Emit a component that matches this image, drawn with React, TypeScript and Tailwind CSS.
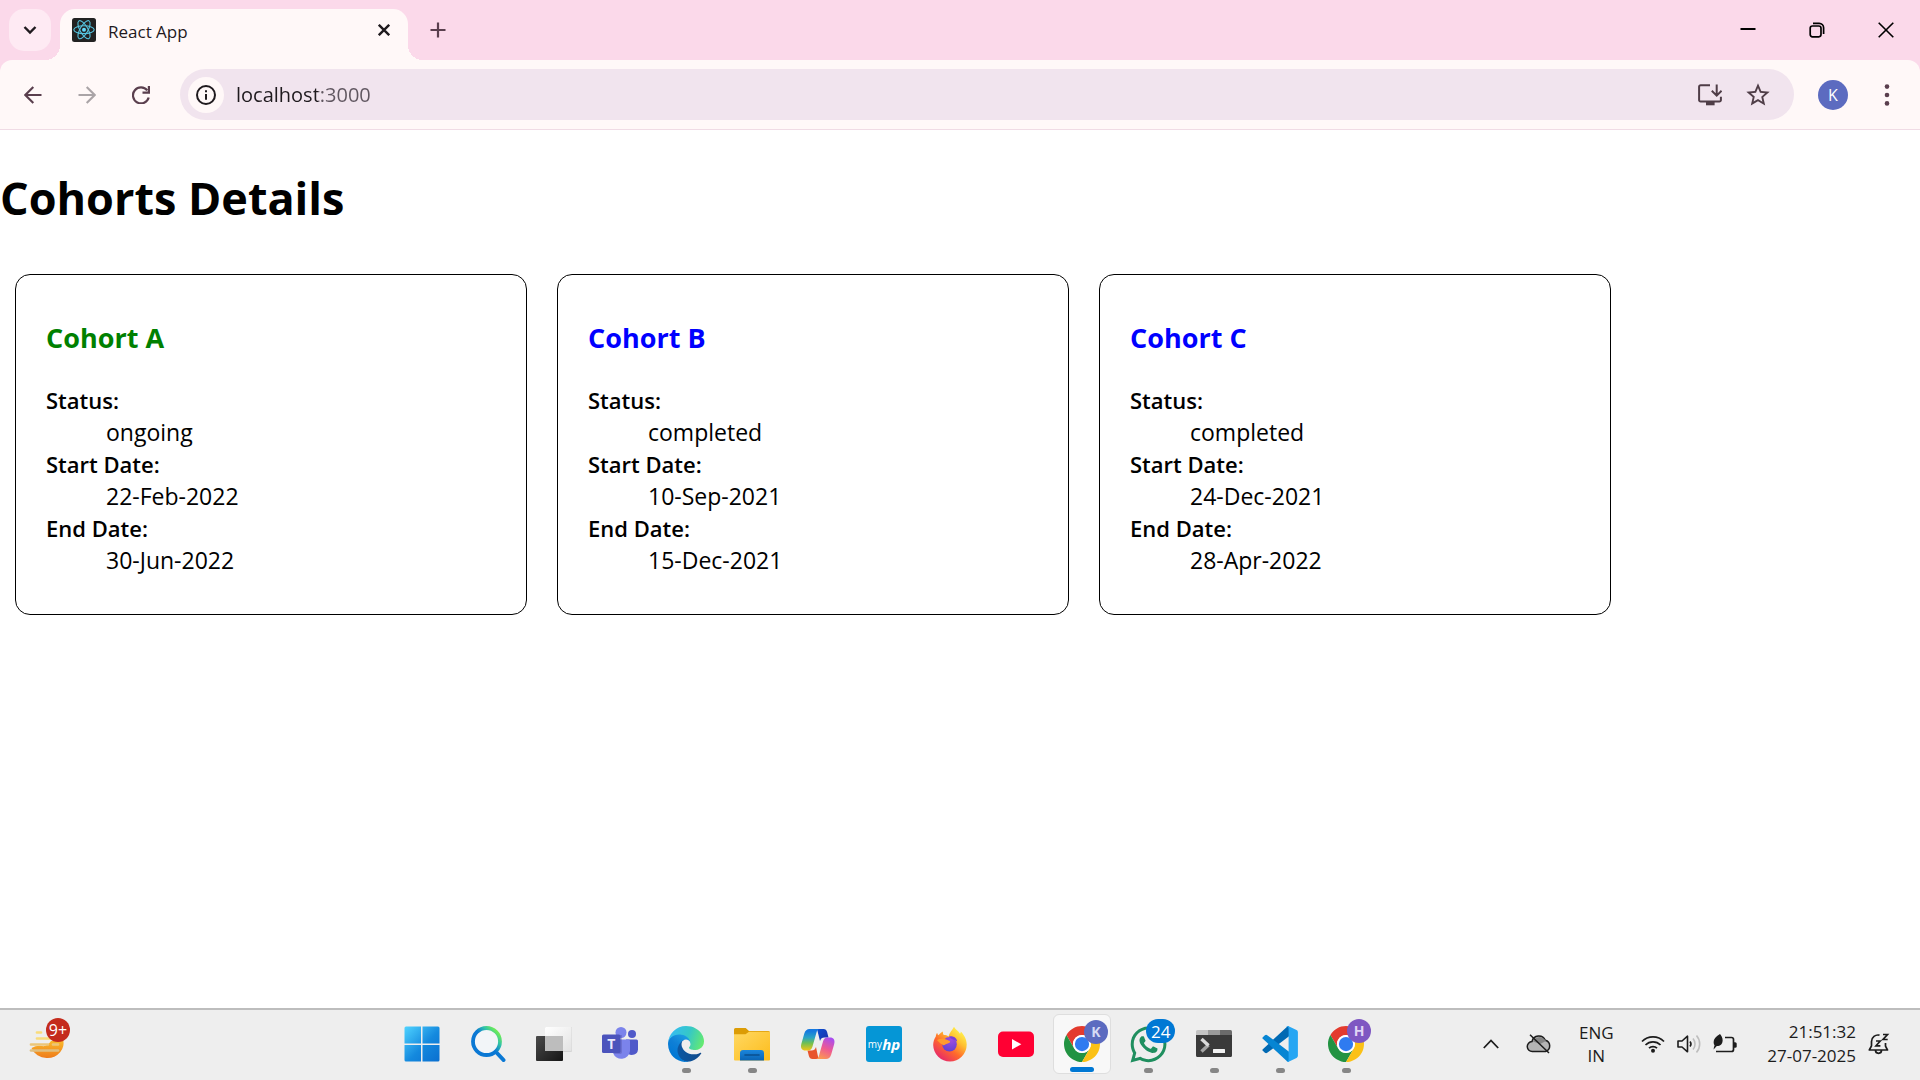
import type { ReactNode } from "react";
import { FaWhatsapp } from "react-icons/fa";

type Cohort = { name: string; status: "ongoing" | "completed"; start: string; end: string };

const cohorts: Cohort[] = [
  { name: "Cohort A", status: "ongoing", start: "22-Feb-2022", end: "30-Jun-2022" },
  { name: "Cohort B", status: "completed", start: "10-Sep-2021", end: "15-Dec-2021" },
  { name: "Cohort C", status: "completed", start: "24-Dec-2021", end: "28-Apr-2022" },
];

function CohortCard({ cohort }: { cohort: Cohort }) {
  return (
    <article className="w-[512px] max-w-full rounded-[15px] border border-black px-[30px] pt-4 pb-[14px]">
      <h3
        className={`my-7 text-[27px] leading-[37px] font-bold ${
          cohort.status === "ongoing" ? "text-[#008000]" : "text-[#0000ff]"
        }`}
      >
        {cohort.name}
      </h3>
      <dl className="mb-6 text-[23px] leading-8">
        <dt className="text-[22px] leading-8 font-semibold">Status:</dt>
        <dd className="ml-[60px]">{cohort.status}</dd>
        <dt className="text-[22px] leading-8 font-semibold">Start Date:</dt>
        <dd className="ml-[60px]">{cohort.start}</dd>
        <dt className="text-[22px] leading-8 font-semibold">End Date:</dt>
        <dd className="ml-[60px]">{cohort.end}</dd>
      </dl>
    </article>
  );
}

function ReactFavicon() {
  return (
    <svg viewBox="0 0 24 24" className="size-6 shrink-0" aria-hidden="true">
      <rect width="24" height="24" rx="2.5" fill="#222" />
      <g fill="none" stroke="#56c5e0" strokeWidth="1.1">
        <ellipse cx="12" cy="11.7" rx="10.2" ry="3.9" />
        <ellipse cx="12" cy="11.7" rx="10.2" ry="3.9" transform="rotate(60 12 11.7)" />
        <ellipse cx="12" cy="11.7" rx="10.2" ry="3.9" transform="rotate(120 12 11.7)" />
      </g>
      <circle cx="12" cy="11.7" r="2" fill="#61dafb" />
    </svg>
  );
}

function TabStrip() {
  return (
    <div className="flex h-[60px] items-start bg-[#fbd9ea]">
      <button
        aria-label="Search tabs"
        className="mt-[9px] ml-[9px] flex size-[42px] shrink-0 items-center justify-center rounded-[15px] bg-[#feeaf3]"
      >
        <svg viewBox="0 0 14 10" className="h-[10px] w-[14px]" fill="none" stroke="#1f1a1e" strokeWidth="2.4">
          <path d="M1.5 2 7 7.5 12.5 2" />
        </svg>
      </button>
      <div className="relative mt-[9px] ml-[9px] flex h-[51px] w-[348px] items-start rounded-t-[15px] bg-[#fff8f8] pt-[9px] pr-[15px] pl-3 before:absolute before:bottom-0 before:-left-[15px] before:size-[15px] before:bg-[radial-gradient(circle_at_0_0,transparent_15px,#fff8f8_15px)] after:absolute after:-right-[15px] after:bottom-0 after:size-[15px] after:bg-[radial-gradient(circle_at_100%_0,transparent_15px,#fff8f8_15px)]">
        <ReactFavicon />
        <span className="ml-3 flex-1 text-[17px] leading-7 text-[#1f1a1e]">React App</span>
        <button aria-label="Close tab" className="mt-[3px] flex size-[18px] items-center justify-center self-start">
          <svg viewBox="0 0 12 12" className="size-3" stroke="#1f1a1e" strokeWidth="2.4">
            <path d="M.8.8l10.4 10.4M11.2.8.8 11.2" />
          </svg>
        </button>
      </div>
      <button aria-label="New tab" className="mt-[9px] ml-[9px] flex size-[42px] items-center justify-center">
        <svg viewBox="0 0 16 16" className="size-4" stroke="#5a3f4e" strokeWidth="2.2">
          <path d="M8 .5v15M.5 8h15" />
        </svg>
      </button>
      <div className="ml-auto flex h-[59px] items-center">
        <button aria-label="Minimize" className="flex h-full w-[69px] items-center justify-center">
          <svg viewBox="0 0 16 16" className="size-4" stroke="#000" strokeWidth="2">
            <path d="M.5 7h15" />
          </svg>
        </button>
        <button aria-label="Restore" className="flex h-full w-[69px] items-center justify-center">
          <svg viewBox="0 0 16 16" className="size-4" fill="none" stroke="#000" strokeWidth="1.7">
            <rect x="1.2" y="4" width="10.8" height="10.8" rx="2.2" />
            <path d="M4 1.4h6.2a4.4 4.4 0 0 1 4.4 4.4V12" />
          </svg>
        </button>
        <button aria-label="Close" className="flex h-full w-[69px] items-center justify-center">
          <svg viewBox="0 0 16 16" className="size-4" stroke="#000" strokeWidth="1.6">
            <path d="M.7.7l14.6 14.6M15.3.7.7 15.3" />
          </svg>
        </button>
      </div>
    </div>
  );
}

function Toolbar() {
  return (
    <div className="bg-[#fbd9ea]">
      <div className="flex h-[70px] items-center rounded-t-[12px] border-b border-[#f0dbe5] bg-[#fff8f8] pl-[6px]">
        <button aria-label="Back" className="flex size-[54px] items-center justify-center">
          <svg viewBox="0 0 18 18" className="size-[18px]" fill="none" stroke="#5a3f4e" strokeWidth="2.1">
            <path d="M17.5 9H1.8M9.3.9 1.3 9l8 8.1" />
          </svg>
        </button>
        <button aria-label="Forward" className="flex size-[54px] items-center justify-center">
          <svg viewBox="0 0 18 18" className="size-[18px]" fill="none" stroke="#aaa4a7" strokeWidth="2.1">
            <path d="M.5 9h15.7M8.7.9l8 8.1-8 8.1" />
          </svg>
        </button>
        <button aria-label="Reload" className="flex size-[54px] items-center justify-center">
          <svg viewBox="0 0 18 18" className="size-[18px]" fill="none" stroke="#5a3f4e" strokeWidth="2.2">
            <path d="M15.3 4.4A8 8 0 1 0 16.7 11.5" />
            <path d="M16.9 0v6.6h-6.4" />
          </svg>
        </button>
        <div className="ml-3 flex h-[51px] min-w-0 flex-1 items-center rounded-full bg-[#f1e4ee] pr-3 pl-2">
          <button
            aria-label="View site information"
            className="flex size-9 shrink-0 items-center justify-center rounded-full bg-[#fff8f8]"
          >
            <svg viewBox="0 0 20 20" className="size-5" fill="none" stroke="#1f1a1e" strokeWidth="2">
              <circle cx="10" cy="10" r="9" />
              <path d="M10 9v5.8M10 5.2v2.1" />
            </svg>
          </button>
          <input
            aria-label="Address and search bar"
            defaultValue="localhost:3000"
            className="ml-3 h-9 min-w-0 flex-1 bg-[linear-gradient(90deg,#1f1a1e_82px,#605660_82px)] bg-clip-text text-[20px] leading-7 text-transparent caret-black outline-none"
          />
          <button aria-label="Install app" className="flex size-12 items-center justify-center">
            <svg viewBox="0 0 24 22" className="h-[22px] w-6" fill="none" stroke="#4f3d47" strokeWidth="2">
              <path d="M12 1.2H2.6A1.5 1.5 0 0 0 1.1 2.7v13.2a1.5 1.5 0 0 0 1.5 1.5h18.8a1.5 1.5 0 0 0 1.5-1.5v-3.2M18.7.5v11M13.8 6.8l4.9 4.9 4.9-4.9" />
              <path d="M8 17.5h8.6v3.8H8z" fill="#4f3d47" stroke="none" />
            </svg>
          </button>
          <button aria-label="Bookmark this tab" className="flex size-12 items-center justify-center">
            <svg viewBox="0 0 24 24" className="size-7" fill="#4f3d47">
              <path d="M22 9.24l-7.19-.62L12 2 9.19 8.63 2 9.24l5.46 4.73L5.82 21 12 17.27 18.18 21l-1.63-7.03L22 9.24zM12 15.4l-3.76 2.27 1-4.28-3.32-2.88 4.38-.38L12 6.1l1.71 4.04 4.38.38-3.32 2.88 1 4.28L12 15.4z" />
            </svg>
          </button>
        </div>
        <button
          aria-label="Profile K"
          className="ml-6 flex size-[30px] shrink-0 items-center justify-center rounded-full bg-[#5c6bc0] text-[16px] font-normal text-white"
        >
          K
        </button>
        <button aria-label="Browser menu" className="mr-[9px] ml-[15px] flex size-12 items-center justify-center">
          <svg viewBox="0 0 6 22" className="h-[22px] w-[6px]" fill="#5a3f4e">
            <circle cx="3" cy="2.6" r="2.3" />
            <circle cx="3" cy="11" r="2.3" />
            <circle cx="3" cy="19.4" r="2.3" />
          </svg>
        </button>
      </div>
    </div>
  );
}

function WeatherIcon() {
  return (
    <svg viewBox="0 0 36 36" className="size-9" fill="none" strokeLinecap="round">
      <defs>
        <linearGradient id="sun" x1="0" y1="0" x2="0" y2="1">
          <stop offset="0" stopColor="#fbc02d" />
          <stop offset="1" stopColor="#ee7b1a" />
        </linearGradient>
      </defs>
      <path d="M34 13A16 15 0 0 1 18 32 16 15 0 0 1 2.5 22Q8 19 13 20T22 15z" fill="url(#sun)" />
      <path d="M8 6.500h4M8 12.500h22" stroke="#f9dc7c" strokeWidth="2.700" />
      <path d="M2 18.500h17M24 18.500h5" stroke="#ecc678" strokeWidth="2.700" />
      <path d="M2 24.500h27" stroke="#dfbf80" strokeWidth="2.700" />
    </svg>
  );
}

function WindowsIcon() {
  return (
    <svg viewBox="0 0 36 36" className="size-9">
      <defs>
        <linearGradient id="win" x1="0" y1="0" x2="1" y2="1">
          <stop offset="0" stopColor="#4fd3ff" />
          <stop offset="0.55" stopColor="#1489de" />
          <stop offset="1" stopColor="#0a6fd0" />
        </linearGradient>
      </defs>
      <path
        fill="url(#win)"
        d="M2 .5h15v17H.5V2A1.500 1.500 0 0 1 2 .5zM18.500.5h15.500A1.500 1.500 0 0 1 35.500 2v15.500h-17zM.5 19h16.500v16.500H2A1.500 1.500 0 0 1 .5 34zM18.500 19h17v15a1.500 1.500 0 0 1-1.500 1.500H18.500z"
      />
    </svg>
  );
}

function SearchIcon() {
  return (
    <svg viewBox="0 0 36 36" className="size-9" fill="none">
      <defs>
        <linearGradient id="lens" x1="0.2" y1="0.8" x2="0.9" y2="0.15">
          <stop offset="0.45" stopColor="#0a78d4" />
          <stop offset="0.75" stopColor="#31c3a8" />
          <stop offset="1" stopColor="#6bea5a" />
        </linearGradient>
      </defs>
      <path d="M26 26l7.500 8" stroke="#0a78d4" strokeWidth="4" strokeLinecap="round" />
      <circle cx="16.500" cy="15.500" r="13.500" fill="#f2f5f8" stroke="url(#lens)" strokeWidth="3.800" />
    </svg>
  );
}

function TaskViewIcon() {
  return (
    <svg viewBox="0 0 36 36" className="size-9">
      <defs>
        <linearGradient id="tvDark" x1="0" y1="0" x2="1" y2="1">
          <stop offset="0" stopColor="#4a4a4a" />
          <stop offset="1" stopColor="#151515" />
        </linearGradient>
        <linearGradient id="tvLight" x1="0" y1="0" x2="1" y2="1">
          <stop offset="0" stopColor="#fff" />
          <stop offset="1" stopColor="#e3e3e3" />
        </linearGradient>
      </defs>
      <rect x="9" y="1" width="27" height="25" rx="1" fill="#d5d5d5" />
      <rect x="9" y="1" width="26.500" height="24" rx="1" fill="url(#tvLight)" />
      <rect x="0" y="10" width="27" height="25" rx="1" fill="url(#tvDark)" />
      <path d="M9 10h18v15H9z" fill="#bdbdbd" />
    </svg>
  );
}

function TeamsIcon() {
  return (
    <svg viewBox="0 0 36 36" className="size-9">
      <circle cx="30" cy="8" r="4" fill="#5059c9" />
      <path d="M24 13.500h10.500a1.500 1.500 0 0 1 1.500 1.500v8.500a6 6 0 0 1-10 4z" fill="#5059c9" />
      <circle cx="19" cy="6.500" r="5.500" fill="#7b83eb" />
      <path d="M11 13.500h15.500a1.500 1.500 0 0 1 1.500 1.500v10a8.800 8.800 0 0 1-17 2z" fill="#7b83eb" />
      <path d="M17 9h3v17a2 2 0 0 1-2 2h-6z" fill="#444791" opacity="0.3" />
      <rect x="0" y="8.500" width="18.500" height="18.500" rx="1.600" fill="#4b53bc" />
      <text x="9.200" y="23" textAnchor="middle" fontSize="14" fontWeight="700" fill="#e9e9fb">
        T
      </text>
    </svg>
  );
}

function EdgeIcon() {
  return (
    <svg viewBox="0 0 256 256" className="size-9">
      <defs>
        <linearGradient id="edgeA" x1="60" y1="177" x2="240" y2="177" gradientUnits="userSpaceOnUse">
          <stop offset="0" stopColor="#0c59a4" />
          <stop offset="1" stopColor="#114a8b" />
        </linearGradient>
        <linearGradient id="edgeB" x1="140" y1="80" x2="40" y2="220" gradientUnits="userSpaceOnUse">
          <stop offset="0" stopColor="#1b9de2" />
          <stop offset="0.5" stopColor="#0f7fd6" />
          <stop offset="1" stopColor="#0078d4" />
        </linearGradient>
        <linearGradient id="edgeC" x1="20" y1="50" x2="250" y2="130" gradientUnits="userSpaceOnUse">
          <stop offset="0" stopColor="#35bdf0" />
          <stop offset="0.5" stopColor="#35c7c8" />
          <stop offset="1" stopColor="#66eb6e" />
        </linearGradient>
      </defs>
      <path fill="url(#edgeA)" d="M231.070 190.540c-3.450 1.810-7 3.400-10.640 4.760a101.160 101.160 0 0 1-35.940 6.460c-47.350 0-88.590-32.530-88.590-74.300a31.480 31.480 0 0 1 16.430-27.300c-42.830 1.800-53.840 46.400-53.840 72.530 0 73.880 68.130 81.370 82.800 81.370 7.910 0 19.840-2.300 27-4.560l1.310-.44a128.340 128.340 0 0 0 66.600-52.800 4 4 0 0 0-5.130-5.720z" />
      <path fill="url(#edgeB)" d="M105.730 241.420a79.200 79.200 0 0 1-22.740-21.340 80.720 80.720 0 0 1 29.530-120c3.120-1.470 8.450-4.130 15.540-4a32.350 32.350 0 0 1 25.690 13 31.880 31.880 0 0 1 6.360 18.660c0-.21 24.460-79.600-80-79.600-43.900 0-80 41.660-80 78.210a130.150 130.150 0 0 0 12.110 56 128 128 0 0 0 156.380 67.110 75.550 75.550 0 0 1-62.780-8z" />
      <path fill="url(#edgeC)" d="M152.330 148.860c-.81 1.050-3.300 2.500-3.300 5.660 0 2.610 1.700 5.120 4.720 7.230 14.380 10 41.490 8.680 41.560 8.680a59.560 59.560 0 0 0 30.270-8.350 61.380 61.380 0 0 0 30.430-52.880c.26-22.410-8-37.310-11.340-43.910C223.460 23.840 177.720 0 128 0A128 128 0 0 0 0 126.200c.48-36.540 36.800-66.050 80-66.050 3.500 0 23.460.34 42 10.070 16.340 8.580 24.900 18.940 30.850 29.210 6.180 10.670 7.280 24.150 7.280 29.520s-2.740 13.330-7.800 19.910z" />
    </svg>
  );
}

function ExplorerIcon() {
  return (
    <svg viewBox="0 0 36 36" className="size-9">
      <defs>
        <linearGradient id="folder" x1="0" y1="0" x2="1" y2="1">
          <stop offset="0" stopColor="#ffd862" />
          <stop offset="1" stopColor="#fdbc1b" />
        </linearGradient>
        <linearGradient id="folderTab" x1="0" y1="0" x2="0" y2="1">
          <stop offset="0" stopColor="#1a86dd" />
          <stop offset="1" stopColor="#0a64b4" />
        </linearGradient>
      </defs>
      <path d="M0 3.500A1.500 1.500 0 0 1 1.500 2h10.200l3.300 3h19.500A1.500 1.500 0 0 1 36 6.500V12H0z" fill="#dc9c05" />
      <path d="M0 8.200h11.500L15 5.800h21V33.500a1 1 0 0 1-1 1H1a1 1 0 0 1-1-1z" fill="url(#folder)" />
      <path d="M6 34.500V27a3 3 0 0 1 3-3h18a3 3 0 0 1 3 3v7.500z" fill="url(#folderTab)" />
      <path d="M11 29h14" stroke="#0a4f8e" strokeWidth="1.600" strokeLinecap="round" />
    </svg>
  );
}

function CopilotIcon() {
  return (
    <svg viewBox="0 0 36 36" className="size-9">
      <defs>
        <linearGradient id="cpA" x1="0.300" y1="0" x2="0.300" y2="1">
          <stop offset="0.100" stopColor="#1579e0" />
          <stop offset="0.400" stopColor="#2aa3c4" />
          <stop offset="0.650" stopColor="#6dbf54" />
          <stop offset="1" stopColor="#f3c514" />
        </linearGradient>
        <linearGradient id="cpB" x1="0.700" y1="0" x2="0.300" y2="1">
          <stop offset="0" stopColor="#a94df0" />
          <stop offset="0.500" stopColor="#ee5a92" />
          <stop offset="1" stopColor="#fb9a52" />
        </linearGradient>
        <linearGradient id="cpC" x1="0" y1="0" x2="1" y2="1">
          <stop offset="0" stopColor="#0b4fd0" />
          <stop offset="1" stopColor="#1c2fa8" />
        </linearGradient>
      </defs>
      <path d="M17 3h6.500c2 0 3 1.200 3.600 3l1.400 5.500h-4c-2.500 0-3.700 1-4.500 3.500z" fill="url(#cpC)" />
      <path d="M18.500 33h-6c-2 0-3-1.200-3.600-3L7.500 24.500h4c2.500 0 3.700-1 4.500-3.500z" fill="#e8542d" />
      <path d="M9.500 3H20c-2 0-3 1.500-3.500 3.500L12.500 20.500c-.8 2.600-2 4-4.700 4H5.500c-3.700 0-5.200-2.500-4.200-6.500l3-10.500C5.200 4.500 7 3 9.500 3z" fill="url(#cpA)" />
      <path d="M26 33H15.500c2 0 3-1.500 3.500-3.500l4-14c.8-2.600 2-4 4.700-4H30c3.700 0 5.200 2.500 4.200 6.500l-3 10.500C30.300 31.500 28.500 33 26 33z" fill="url(#cpB)" />
    </svg>
  );
}

function MyHpIcon() {
  return (
    <span className="flex size-9 items-center justify-center rounded-[3px] bg-[#0596d6] leading-9 text-white">
      <span className="text-[10px]">my</span>
      <span className="text-[15px] font-bold italic">hp</span>
    </span>
  );
}

function FirefoxIcon() {
  return (
    <svg viewBox="0 0 36 36" className="size-9">
      <defs>
        <linearGradient id="fox" x1="0.850" y1="0.100" x2="0.200" y2="0.950">
          <stop offset="0" stopColor="#fff44f" />
          <stop offset="0.300" stopColor="#ffbf30" />
          <stop offset="0.600" stopColor="#ff6a2b" />
          <stop offset="1" stopColor="#e6266d" />
        </linearGradient>
        <radialGradient id="foxGlobe" cx="0.600" cy="0.200" r="0.900">
          <stop offset="0" stopColor="#a04de0" />
          <stop offset="1" stopColor="#5b3fd0" />
        </radialGradient>
      </defs>
      <path
        fill="url(#fox)"
        d="M22 .8c1.500 2.800 4.400 4.200 6 7 .5-.4.800-1.300.7-2.200 3 2.700 6 7.700 6 13A16.800 16.800 0 0 1 18 35.500 16.800 16.800 0 0 1 1.200 19c0-3.400 1-6 2.500-8.300.2-1.500.7-3 1.500-4 .2 1.500.8 2 1.300 2.500C7.500 8 9 6.500 11 5.500c-.3 1.500 0 2.700.8 3.500 2 .1 3.500.3 4.700 1.500C17 7.500 20 4.500 22 .8z"
      />
      <circle cx="17.500" cy="18.300" r="7.300" fill="url(#foxGlobe)" />
      <path d="M5 14c3.500-2 7.500-1 10.500 0 1.500.5 2.700 1 2.700 2-.7 1.300-2.700 1.500-4.500 2.200-1.500 1-3 1.500-3.500 0C8.500 18 7 16 5 14z" fill="#ff9a2e" />
      <path d="M17 10.500c4-1 8 1.500 8.200 5-1.500-1-2-1.500-3.500-1.800-1.200-.5-3.200-1-4.700-3.200z" fill="#7a3fd8" />
    </svg>
  );
}

function YouTubeIcon() {
  return (
    <svg viewBox="0 0 36 36" className="size-9">
      <rect y="5.500" width="36" height="25.500" rx="5" fill="#ff0033" />
      <path d="M14 13v10.500l9.300-5.250z" fill="#fff" />
    </svg>
  );
}

function ChromeIcon() {
  return (
    <svg viewBox="0 0 48 48" className="size-9">
      <path d="M24 12h20.780A24 24 0 0 0 3.220 12L13.600 30A12 12 0 0 1 24 12z" fill="#e33b2e" />
      <path d="M13.600 30 3.220 12A24 24 0 0 0 24 48l10.390-18A12 12 0 0 1 13.600 30z" fill="#229342" />
      <path d="M34.390 30 24 48a24 24 0 0 0 20.780-36H24a12 12 0 0 1 10.390 18z" fill="#fbc116" />
      <circle cx="24" cy="24" r="12" fill="#fff" />
      <circle cx="24" cy="24" r="9.500" fill="#2f7bf0" />
    </svg>
  );
}

function TerminalIcon() {
  return (
    <svg viewBox="0 0 36 36" className="size-9">
      <path d="M0 9h36v20.500A1.500 1.500 0 0 1 34.500 31h-33A1.500 1.500 0 0 1 0 29.500z" fill="#3a3a3a" />
      <path d="M1.500 4H12v5H0V5.500A1.500 1.500 0 0 1 1.500 4z" fill="#c4c4c4" />
      <path d="M12 4h12v5H12z" fill="#9a9a9a" />
      <path d="M24 4h10.500A1.500 1.500 0 0 1 36 5.500V9H24z" fill="#6b6b6b" />
      <path d="M5.500 25.500l7-6.500" stroke="#a5a5a5" strokeWidth="3.400" />
      <path d="M5.500 13l7 6.500" stroke="#dcdcdc" strokeWidth="3.400" />
      <rect x="17" y="23" width="12" height="4" rx="0.500" fill="#f2f2f2" />
    </svg>
  );
}

function VsCodeIcon() {
  return (
    <svg viewBox="0 0 36 36" className="size-9">
      <path d="M.8 23.200 24.500 1.200Q25.500.2 27 .3v10L5.200 26.800q-1.200.8-2.300-.1L.8 24.800q-.9-.8 0-1.600z" fill="#0069b3" />
      <path d="M.8 12.800 24.500 34.800q1 1 2.500.9v-10L5.200 9.200q-1.200-.8-2.300.1L.8 11.200q-.9.8 0 1.600z" fill="#0685d3" />
      <path d="M26.600.2 34.500 4a2.400 2.400 0 0 1 1.400 2.200v23.600a2.400 2.400 0 0 1-1.400 2.200l-7.900 3.800q-1.400.4-2.400-.7 2.400.9 2.400-1.500V2.400Q26.600.4 24.200.9q1-1.100 2.400-.7z" fill="#26a6f3" />
    </svg>
  );
}

function CornerBadge({ children, tone }: { children: ReactNode; tone: string }) {
  return (
    <span
      className={`absolute top-[5px] flex h-6 min-w-6 items-center justify-center rounded-full leading-none ${tone}`}
    >
      {children}
    </span>
  );
}

type TaskItem = { label: string; icon: ReactNode; state?: "running" | "active"; badge?: ReactNode };

const taskItems: TaskItem[] = [
  { label: "Start", icon: <WindowsIcon /> },
  { label: "Search", icon: <SearchIcon /> },
  { label: "Task view", icon: <TaskViewIcon /> },
  { label: "Teams", icon: <TeamsIcon /> },
  { label: "Edge", icon: <EdgeIcon />, state: "running" },
  { label: "File Explorer", icon: <ExplorerIcon />, state: "running" },
  { label: "Copilot", icon: <CopilotIcon /> },
  { label: "myHP", icon: <MyHpIcon /> },
  { label: "Firefox", icon: <FirefoxIcon /> },
  { label: "YouTube", icon: <YouTubeIcon /> },
  {
    label: "Chrome, profile K",
    icon: <ChromeIcon />,
    state: "active",
    badge: <CornerBadge tone="left-[30px] bg-[#5c6bc0] text-[14px] font-bold text-[#d5daf5]">K</CornerBadge>,
  },
  {
    label: "WhatsApp",
    icon: <FaWhatsapp className="size-[41px] text-[#1f8f5f]" />,
    state: "running",
    badge: <CornerBadge tone="left-[27px] bg-[#0078d4] px-[5px] text-[17px] text-white">24</CornerBadge>,
  },
  { label: "Terminal", icon: <TerminalIcon />, state: "running" },
  { label: "Visual Studio Code", icon: <VsCodeIcon />, state: "running" },
  {
    label: "Chrome, profile H",
    icon: <ChromeIcon />,
    state: "running",
    badge: <CornerBadge tone="left-[30px] bg-[#7e57c2] text-[14px] font-bold text-[#e0d5f5]">H</CornerBadge>,
  },
];

function TaskButton({ item }: { item: TaskItem }) {
  const active = item.state === "active";
  return (
    <button
      aria-label={item.label}
      className={`relative flex h-[60px] w-[58px] shrink-0 items-center justify-center rounded-md ${
        active ? "border border-[#dedede] bg-[#f8f8f8]" : ""
      }`}
    >
      {item.icon}
      {item.badge}
      {item.state && (
        <span
          className={`absolute bottom-px h-[5px] rounded-full ${active ? "w-6 bg-[#0078d4]" : "w-[9px] bg-[#868686]"}`}
        />
      )}
    </button>
  );
}

function SystemTray() {
  return (
    <div className="flex items-center pr-[24px] text-[17px] leading-6 text-[#1c1c1c]">
      <button aria-label="Show hidden icons" className="flex size-12 items-center justify-center">
        <svg viewBox="0 0 16 10" className="h-[10px] w-4" fill="none" stroke="#1c1c1c" strokeWidth="1.800">
          <path d="M.8 9 8 1.500 15.200 9" />
        </svg>
      </button>
      <button aria-label="OneDrive, not signed in" className="flex size-12 items-center justify-center">
        <svg viewBox="0 0 26 20" className="h-5 w-[26px]" stroke="#1c1c1c" strokeWidth="1.500">
          <path d="M6.500 17.500a5 5 0 0 1-.5-10 7 7 0 0 1 13.300-1.200A5.800 5.800 0 0 1 19.500 17.500z" fill="#b5b5b5" />
          <path d="M7 7.500a7 7 0 0 1 12-1.700l1 1.200-6 3z" fill="#858585" stroke="none" />
          <path d="M4 .8 23 19" />
        </svg>
      </button>
      <button className="ml-2 w-[50px] text-center leading-[23px]">
        ENG
        <br />
        IN
      </button>
      <button aria-label="Network, volume and battery" className="ml-5 flex items-center gap-3">
        <svg viewBox="0 0 24 18" className="h-[18px] w-6" fill="none" stroke="#1c1c1c" strokeWidth="1.700">
          <path d="M1 6.500a15.600 15.600 0 0 1 22 0M4.500 10a10.600 10.600 0 0 1 15 0M8 13.200a5.700 5.700 0 0 1 8 0" />
          <circle cx="12" cy="15.700" r="2" fill="#1c1c1c" stroke="none" />
        </svg>
        <svg viewBox="0 0 24 20" className="h-5 w-6" fill="none" stroke="#1c1c1c" strokeWidth="1.600">
          <path d="M1 7h4l5.500-4.800v15.600L5 13H1z" strokeLinejoin="round" />
          <path d="M13 7.500a4 4 0 0 1 0 5" />
          <path d="M16 4.500a8.500 8.500 0 0 1 0 11M19.500 1.500a13 13 0 0 1 0 17" stroke="#bdbdbd" />
        </svg>
        <svg viewBox="0 0 24 20" className="h-5 w-6" fill="none" stroke="#1c1c1c" strokeWidth="1.700">
          <path d="M12 3.500h6.500a2 2 0 0 1 2 2v10a2 2 0 0 1-2 2H3" />
          <path d="M21 8.200h1.200A1.500 1.500 0 0 1 23.700 9.700v2.600a1.500 1.500 0 0 1-1.500 1.500H21z" fill="#1c1c1c" stroke="none" />
          <path d="M7 0c1.800 2.200 2.800 4.300 2.600 7-.2 2.800-2 4.600-4.400 4.900L3.800 12 .6 15.600C.8 14 .9 13 1.600 11.600-.5 8 .5 3.600 7 0z" fill="#1c1c1c" stroke="none" />
        </svg>
      </button>
      <button className="ml-[30px] text-right">
        21:51:32
        <br />
        27-07-2025
      </button>
      <button aria-label="Notifications, do not disturb" className="ml-3 flex h-12 w-7 items-center">
        <svg viewBox="0 0 22 22" className="size-[22px]" fill="none" stroke="#1c1c1c" strokeWidth="1.700">
          <path d="M11.500 2.200A6.500 6.500 0 0 0 3.500 8.500v4.300L1.300 17h18.200l-2-3.800V10M7.500 17.300a3 3 0 0 0 6 0" strokeLinejoin="round" />
          <path d="M8 8h4.200L8 12.800h4.400M15 1.500h4.500L15 6.500h4.700" />
        </svg>
      </button>
    </div>
  );
}

function Taskbar() {
  return (
    <footer className="grid h-[72px] grid-cols-[388px_1fr_auto] items-center border-t-2 border-[#bdbdbd] bg-[#eeeeee] pb-[2px]">
      <button aria-label="Weather" className="relative ml-[29px] flex size-10 items-center">
        <WeatherIcon />
        <span className="absolute -top-[6px] left-[17px] flex size-6 items-center justify-center rounded-full bg-[#c42b1c] text-[16px] leading-none text-white">
          9+
        </span>
      </button>
      <nav aria-label="Taskbar" className="flex gap-2 pl-[5px]">
        {taskItems.map((item) => (
          <TaskButton key={item.label} item={item} />
        ))}
      </nav>
      <SystemTray />
    </footer>
  );
}

export default function App() {
  return (
    <div className="flex min-h-screen flex-col bg-white font-['Open_Sans','Noto_Sans',sans-serif] text-black">
      <header>
        <TabStrip />
        <Toolbar />
      </header>
      <main className="flex-1">
        <h1 className="mt-9 text-[45px] leading-[64px] font-bold">Cohorts Details</h1>
        <section className="mt-11 flex flex-wrap gap-[30px] px-[15px]">
          {cohorts.map((cohort) => (
            <CohortCard key={cohort.name} cohort={cohort} />
          ))}
        </section>
      </main>
      <Taskbar />
    </div>
  );
}
